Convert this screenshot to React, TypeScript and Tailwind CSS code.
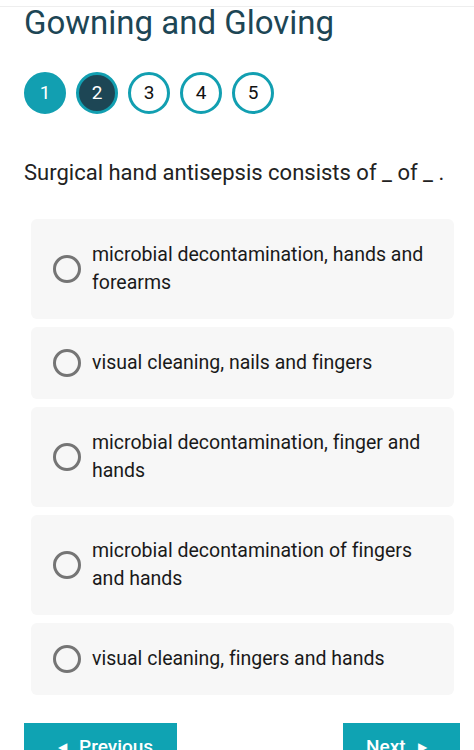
import React from "react";

const options = [
  "microbial decontamination, hands and forearms",
  "visual cleaning, nails and fingers",
  "microbial decontamination, finger and hands",
  "microbial decontamination of fingers and hands",
  "visual cleaning, fingers and hands",
];

function StepDot({ n, state }: { n: number; state: "done" | "current" | "todo" }) {
  const cls =
    state === "done"
      ? "bg-[#129fb1] border-[#129fb1] text-white"
      : state === "current"
      ? "bg-[#1d4655] border-[#129fb1] text-white"
      : "bg-white border-[#129fb1] text-[#111]";
  return (
    <div
      className={`w-[42px] h-[42px] rounded-full border-[3px] flex items-center justify-center text-[19px] ${cls}`}
    >
      {n}
    </div>
  );
}

export default function App() {
  return (
    <div className="bg-white w-[474px] h-[750px] overflow-hidden font-['Roboto',sans-serif] [font-variant-ligatures:none]">
      <div className="h-[6px]" />
      <div className="border-t border-[#eeeeee]" />
      <div className="px-6">
        <h1 className="text-[33px] leading-[32px] text-[#1d4655] font-normal">
          Gowning and Gloving
        </h1>

        <div className="flex gap-[10px] mt-[33px]">
          <StepDot n={1} state="done" />
          <StepDot n={2} state="current" />
          <StepDot n={3} state="todo" />
          <StepDot n={4} state="todo" />
          <StepDot n={5} state="todo" />
        </div>

        <p className="mt-[45px] text-[22px] leading-[28px] text-[#222]">
          Surgical hand antisepsis consists of _ of _ .
        </p>

        <div className="mt-[32px] ml-[7px] mr-[-4px] flex flex-col gap-2">
          {options.map((o, i) => (
            <div
              key={i}
              className="bg-[#f7f7f7] rounded-md flex items-center py-[22px] pl-[22px] pr-4"
            >
              <span className="w-[28px] h-[28px] rounded-full border-[3px] border-[#757575] shrink-0" />
              <span className="ml-[11px] text-[19.5px] leading-[28px] text-[#1a1a1a]">{o}</span>
            </div>
          ))}
        </div>

        <div className="flex justify-between mt-[28px] mr-[-10px]">
          <button className="bg-[#0fa3b3] text-white w-[153px] h-[48px] flex items-center pl-[34px] gap-[12px] text-[19px] font-medium">
            <span className="text-[12px]">◀</span> Previous
          </button>
          <button className="bg-[#0fa3b3] text-white w-[117px] h-[48px] flex items-center pl-[23px] gap-[12px] text-[19px] font-medium">
            Next <span className="text-[12px]">▶</span>
          </button>
        </div>
      </div>
    </div>
  );
}
